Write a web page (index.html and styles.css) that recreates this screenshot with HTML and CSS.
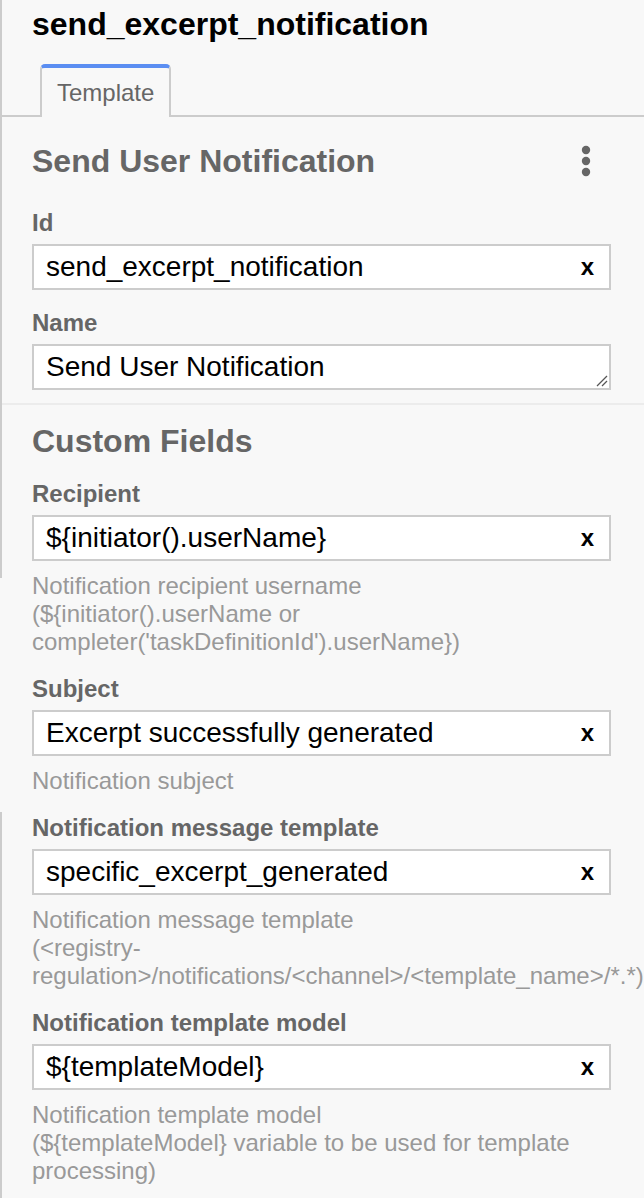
FILE: index.html
```html
<!DOCTYPE html>
<html lang="en">
<head>
<meta charset="utf-8">
<title>send_excerpt_notification</title>
<link rel="stylesheet" href="styles.css">
</head>
<body>
<div class="panel">
  <div class="panel-head">
    <h1 class="panel-title">send_excerpt_notification</h1>
  </div>
  <div class="tabs">
    <div class="tab tab-active">Template</div>
  </div>

  <section class="group group-first">
    <div class="group-header">
      <h2 class="group-title">Send User Notification</h2>
      <svg class="menu-dots" width="10" height="32" viewBox="0 0 10 32" aria-hidden="true">
        <circle cx="5" cy="5" r="4.2" fill="#666"/>
        <circle cx="5" cy="16" r="4.2" fill="#666"/>
        <circle cx="5" cy="27" r="4.2" fill="#666"/>
      </svg>
    </div>
    <div class="field">
      <div class="label">Id</div>
      <div class="input"><span class="value">send_excerpt_notification</span><span class="clear">x</span></div>
    </div>
    <div class="field field-last">
      <div class="label">Name</div>
      <div class="input textarea"><span class="value">Send User Notification</span>
        <svg class="grip" width="12" height="12" viewBox="0 0 12 12" aria-hidden="true">
          <line x1="11" y1="1" x2="1" y2="11" stroke="#555" stroke-width="1.2"/>
          <line x1="11" y1="6" x2="6" y2="11" stroke="#555" stroke-width="1.2"/>
        </svg>
      </div>
    </div>
  </section>

  <section class="group">
    <div class="group-header">
      <h2 class="group-title">Custom Fields</h2>
    </div>
    <div class="field">
      <div class="label">Recipient</div>
      <div class="input"><span class="value">${initiator().userName}</span><span class="clear">x</span></div>
      <div class="desc">Notification recipient username<br>(${initiator().userName or completer('taskDefinitionId').userName})</div>
    </div>
    <div class="field">
      <div class="label">Subject</div>
      <div class="input"><span class="value">Excerpt successfully generated</span><span class="clear">x</span></div>
      <div class="desc">Notification subject</div>
    </div>
    <div class="field">
      <div class="label">Notification message template</div>
      <div class="input"><span class="value">specific_excerpt_generated</span><span class="clear">x</span></div>
      <div class="desc">Notification message template<br>(&lt;registry-<br><span class="nowrap">regulation&gt;/notifications/&lt;channel&gt;/&lt;template_name&gt;/*.*)</span></div>
    </div>
    <div class="field">
      <div class="label">Notification template model</div>
      <div class="input"><span class="value">${templateModel}</span><span class="clear">x</span></div>
      <div class="desc">Notification template model<br>(${templateModel} variable to be used for template processing)</div>
    </div>
  </section>
</div>
</body>
</html>
```

FILE: styles.css
```css
* {
  box-sizing: border-box;
}

html, body {
  margin: 0;
  padding: 0;
  background: #f8f8f8;
}

body {
  font-family: "Liberation Sans", Arial, Helvetica, sans-serif;
  overflow: hidden;
}

.panel {
  min-height: 1198px;
  width: 644px;
  background:
    linear-gradient(#cccccc, #cccccc) 0 0 / 2px 578px no-repeat,
    linear-gradient(#cccccc, #cccccc) 0 812px / 2px 400px no-repeat,
    #f8f8f8;
  overflow: hidden;
}

.panel-head {
  padding: 6px 33px 0 32px;
}

.panel-title {
  margin: 0;
  font-size: 32px;
  line-height: 36px;
  font-weight: bold;
  color: #000;
}

.tabs {
  display: flex;
  margin-top: 22px;
  padding-left: 40px;
  border-bottom: 2px solid #cccccc;
  margin-left: 2px;
}

.tab {
  margin-left: -2px;
  margin-bottom: -2px;
  height: 53px;
  padding: 0 15px;
  font-size: 24px;
  line-height: 49px;
  color: #666;
  background: #f8f8f8;
  border: 2px solid #cccccc;
  border-bottom: none;
  border-top: 4px solid #5b8ef2;
  border-radius: 5px 5px 0 0;
}

.group {
  padding: 26px 33px 13px 30px;
  border-bottom: 2px solid #ececec;
  margin-left: 2px;
}

.group + .group {
  padding-top: 18px;
  border-bottom: none;
}

.group-header {
  display: flex;
  align-items: center;
  justify-content: space-between;
  margin-bottom: 30px;
}

.group + .group .group-header {
  margin-bottom: 21px;
}

.group-title {
  margin: 0;
  font-size: 32px;
  line-height: 36px;
  font-weight: bold;
  color: #666;
}

.menu-dots {
  margin-right: 20px;
  display: block;
}

.field {
  margin-bottom: 19px;
}

.field-last {
  margin-bottom: 0;
}

.label {
  font-size: 24px;
  line-height: 28px;
  font-weight: bold;
  color: #666;
  margin-bottom: 7px;
}

.input {
  position: relative;
  display: flex;
  align-items: center;
  height: 46px;
  background: #fff;
  border: 2px solid #cccccc;
  padding: 0 15px 0 12px;
  font-size: 28px;
  line-height: 42px;
  color: #000;
}

.value {
  flex: 1;
  white-space: nowrap;
  overflow: hidden;
}

.clear {
  font-size: 24px;
  font-weight: bold;
  color: #000;
  line-height: 42px;
}

.grip {
  position: absolute;
  right: 1px;
  bottom: 1px;
}

.desc {
  margin-top: 11px;
  font-size: 24px;
  line-height: 28px;
  color: #999;
  width: 579px;
}

.nowrap {
  white-space: nowrap;
}
```
